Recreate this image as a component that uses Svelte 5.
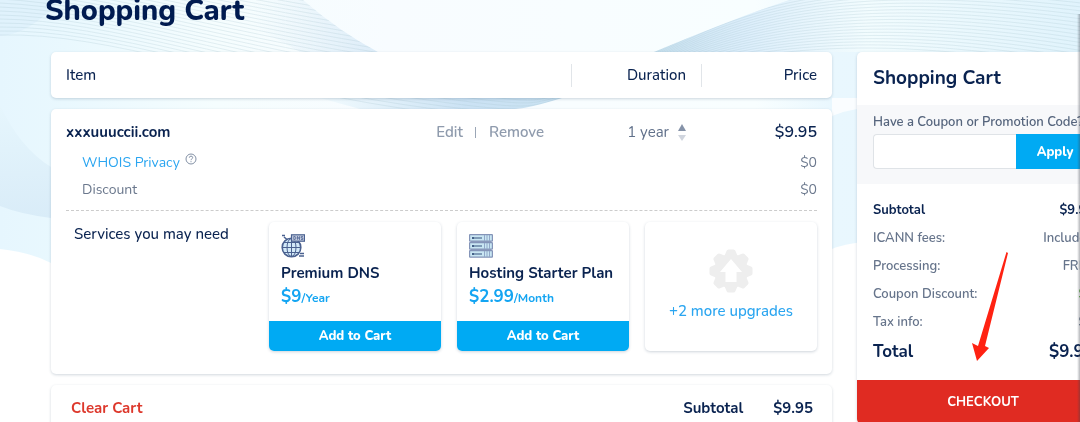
<script>
  const services = [
    { name: 'Premium DNS', price: '$9', unit: '/Year', icon: 'dns' },
    { name: 'Hosting Starter Plan', price: '$2.99', unit: '/Month', icon: 'server' }
  ];
  const fees = [
    { label: 'ICANN fees:', value: 'Included' },
    { label: 'Processing:', value: 'FREE' },
    { label: 'Coupon Discount:', value: '$0', green: true },
    { label: 'Tax info:', value: '$0' }
  ];
  const steps = Array.from({ length: 30 }, (_, i) => i);
  const leftLines = steps.map((i) => `M0 ${35 - i * 4} C110 ${32 - i * 3} 240 ${84 - i * 4} 400 ${108 - i * 4} S520 ${112 - i * 2} 580 ${98 - i}`);
  const rightLines = steps.map((i) => `M640 ${84 - i} C740 ${52 - i * 3} 860 ${28 - i * 3} 1090 ${72 - i * 4}`);
</script>

<div class="page">
  <svg class="waves" viewBox="0 0 1080 422" preserveAspectRatio="none" aria-hidden="true">
    <defs>
      <linearGradient id="sky" x1="0" y1="0" x2="1" y2="0">
        <stop offset="0" stop-color="#e6f6fe" />
        <stop offset=".06" stop-color="#e9f8fe" />
        <stop offset=".2" stop-color="#f5fdfe" />
        <stop offset=".36" stop-color="#f8fcff" />
        <stop offset=".7" stop-color="#f8feff" />
        <stop offset=".77" stop-color="#e9f7fe" />
        <stop offset="1" stop-color="#e6f7fd" />
      </linearGradient>
      <linearGradient id="band" x1="0" y1="0" x2="1" y2="0">
        <stop offset="0" stop-color="#c9e2f1" />
        <stop offset=".22" stop-color="#dceefb" />
        <stop offset=".5" stop-color="#f2fcfe" />
        <stop offset="1" stop-color="#e0f3fc" />
      </linearGradient>
      <linearGradient id="fold" x1="0" y1="0" x2="1" y2="0">
        <stop offset=".3" stop-color="#e0eff8" stop-opacity="0" />
        <stop offset="1" stop-color="#dcecf8" />
      </linearGradient>
      <linearGradient id="shade" x1="0" y1="0" x2="0" y2="1">
        <stop offset="0" stop-color="#e6f6fd" />
        <stop offset="1" stop-color="#d9ecf8" />
      </linearGradient>
      <linearGradient id="tail" x1="0" y1="0" x2="1" y2="0">
        <stop offset="0" stop-color="#f2fbfe" />
        <stop offset=".6" stop-color="#cbe2f4" />
        <stop offset="1" stop-color="#c9e2f2" />
      </linearGradient>
      <clipPath id="left"><path d="M0 0H303Q340 32 378 52L562 98Q530 108 515 109H0Z" /></clipPath>
      <clipPath id="right"><path d="M654 52Q745 14 790 0H1080V52Z" /></clipPath>
    </defs>
    <path d="M0 0H1080V230Q860 235 832 249Q500 350 51 263Q30 252 0 249Z" fill="url(#sky)" />
    <path d="M832 98H857V109Q844 111 832 116Z" fill="#fafdff" />
    <path d="M0 105Q20 148 51 167V218Q20 214 0 206Z" fill="url(#shade)" />
    <path d="M0 0H60Q30 34 0 36Z" fill="#e0f2fc" />
    <path d="M200 0H303Q340 32 378 52H300Q250 24 200 0Z" fill="url(#fold)" />
    <path d="M320 98H562Q530 108 515 109H360Z" fill="url(#tail)" />
    <path d="M654 52Q745 14 790 0H1080V52Z" fill="url(#band)" />
    <g fill="none" stroke="#a9c6d0" stroke-width=".8" opacity=".34">
      <g clip-path="url(#left)">{#each leftLines as d}<path {d} />{/each}</g>
      <g clip-path="url(#right)">{#each rightLines as d}<path {d} />{/each}</g>
    </g>
  </svg>

  <div class="content">
    <h1>Shopping Cart</h1>
    <div class="columns">
      <main>
        <div class="card head">
          <span class="grow">Item</span>
          <span class="duration">Duration</span>
          <span class="price">Price</span>
        </div>

        <section class="card product">
          <div class="row domain">
            <strong class="grow">xxxuuuccii.com</strong>
            <div class="actions"><button>Edit</button><i></i><button>Remove</button></div>
            <div class="term">
              <span>1 year</span>
              <button class="stepper" aria-label="Change duration">
                <svg width="8" height="17" viewBox="0 0 8 17"><path d="M4 0L8 7H0Z" fill="#8592a8" /><path d="M4 17L8 11H0Z" fill="#d0d5de" /></svg>
              </button>
            </div>
            <b class="amount">$9.95</b>
          </div>
          <div class="row sub">
            <span class="privacy"><a href="#whois">WHOIS Privacy</a>
              <svg width="12" height="12" viewBox="0 0 12 12" fill="none" stroke="#8290a5"><circle cx="6" cy="6" r="5" /><path d="M4.300 4.700Q4.400 3.100 6 3.100T7.700 4.600Q7.700 5.400 6.800 5.900Q6 6.300 6 7.200M6 8.200V9.200" /></svg>
            </span>
            <span>$0</span>
          </div>
          <div class="row sub"><span>Discount</span><span>$0</span></div>

          <div class="services">
            <h2>Services you may need</h2>
            {#each services as s}
              <article class="service">
                <div class="info">
                  {#if s.icon === 'dns'}
                    <svg width="24" height="24" viewBox="0 0 24 24" fill="none" stroke="#4a6190">
                      <circle cx="10.5" cy="13.5" r="9.3" fill="#d3e9f8" stroke-width="1.6" />
                      <ellipse cx="10.5" cy="13.5" rx="4.5" ry="9" />
                      <path d="M10.5 4V23M1 13.5H20M3 8.5H18M3 18.5H18" />
                      <path d="M1 1.500H4M3 3L6 5.500M19 19.500H23M18 22H23" stroke-width="1.6" />
                      <rect x="10.5" y=".8" width="13" height="6.4" fill="#c5cde0" stroke-width="1.2" />
                      <path d="M12.8 2.400V5.600M12.8 2.400Q15 2.400 15 4T12.8 5.600M16.5 5.700V2.400L18.5 5.600V2.300M22 2.600H20.200V4H21.8V5.500H20" stroke-width=".8" />
                    </svg>
                  {:else}
                    <svg width="24" height="24" viewBox="0 0 24 24">
                      <path d="M2 6H22V18H2Z" fill="#8795b7" />
                      {#each [0, 8, 16] as y}
                        <rect x=".6" y={y + 0.6} width="22.8" height="6.6" rx=".5" fill="#c9e6f3" stroke="#8494b8" stroke-width="1.2" />
                        <path d={`M3 ${y + 4}H13`} stroke="#36537e" stroke-width="1.2" />
                        <circle cx="4" cy={y + 4} r="1.1" fill="#36537e" />
                        <path d={`M15.5 ${y + 1}V${y + 7}M18 ${y + 1}V${y + 7}M20.5 ${y + 1}V${y + 7}`} stroke="#91a8c8" />
                      {/each}
                    </svg>
                  {/if}
                  <h3>{s.name}</h3>
                  <p><b>{s.price}</b>{s.unit}</p>
                </div>
                <button class="add">Add to Cart</button>
              </article>
            {/each}
            <a class="service more" href="#upgrades">
              <svg width="44" height="44" viewBox="-22 -22 44 44" fill="#eee">
                <circle r="17" />
                {#each [0, 45, 90, 135, 180, 225, 270, 315] as a}
                  <path d="M-7 -14L-4.500 -20Q-4 -21.500 -2.500 -21.500H2.500Q4 -21.500 4.500 -20L7 -14Z" transform={`rotate(${a})`} />
                {/each}
                <path d="M0 -12L11 1H5.500V11H-5.500V1H-11Z" fill="#fff" />
              </svg>
              <span>+2 more upgrades</span>
            </a>
          </div>
        </section>

        <div class="card foot">
          <button class="clear">Clear Cart</button>
          <b>Subtotal</b><b>$9.95</b>
        </div>
      </main>

      <aside>
        <h2>Shopping Cart</h2>
        <form class="coupon">
          <label for="coupon">Have a Coupon or Promotion Code?</label>
          <div class="field"><input id="coupon" type="text" /><button type="button">Apply</button></div>
        </form>
        <dl>
          <div class="line strong"><dt>Subtotal</dt><dd>$9.95</dd></div>
          {#each fees as f}
            <div class="line"><dt>{f.label}</dt><dd class:green={f.green}>{f.value}</dd></div>
          {/each}
          <div class="line total"><dt>Total</dt><dd>$9.95</dd></div>
        </dl>
        <button class="checkout">CHECKOUT</button>
        <svg class="arrow" width="36" height="110" viewBox="0 0 36 110" aria-hidden="true"><path d="M34.500 0L36 1L13 94L17 96L5 109L0 91L6 94Z" fill="#ff2212" /></svg>
      </aside>
    </div>
  </div>
  <div class="edge"></div>
</div>

<style>
  :global(body) { margin: 0; background: #fff; }
  .page { position: relative; overflow: hidden; height: 100vh; font: 15px/20px "Nunito", "Open Sans", sans-serif; color: #0a2350; }
  .waves { position: absolute; inset: 0; width: 100%; height: 100%; }
  .content { position: relative; padding-left: 51px; margin-right: -29px; }
  h1, h2, h3, p, dl, dd { margin: 0; }
  h1 { margin-left: -6px; height: 52px; font-size: 29px; line-height: 22px; font-weight: 800; color: #001b50; }
  button { font: inherit; border: 0; padding: 0; background: none; color: inherit; cursor: pointer; }
  a { color: #2aa5f0; text-decoration: none; }
  .columns { display: grid; grid-template-columns: minmax(0, 1fr) 252px; gap: 25px; align-items: start; }
  main { display: grid; gap: 11px; }
  .card { background: #fff; border-radius: 5px; box-shadow: 0 1px 3px rgba(30, 60, 90, .2); }
  .grow { flex: 1; }
  .head { display: flex; align-items: center; height: 46px; padding: 0 15px; }
  .head { font-weight: 500; }
  .duration, .price { border-left: 1px solid #e1e5e9; text-align: right; line-height: 23px; }
  .duration { width: 114px; padding-right: 15px; }
  .price { width: 115px; }
  .product { padding: 12px 15px 23px; height: 230px; }
  .row { display: flex; align-items: center; }
  .domain { height: 22px; }
  .domain strong { font-weight: 700; }
  .actions { display: flex; align-items: center; color: #8f9bad; font-weight: 600; }
  .actions i { width: 1px; height: 11px; margin: 0 13px 0 12px; background: #9ba6b6; }
  .term { display: flex; align-items: center; justify-content: flex-end; gap: 9px; width: 142px; color: #60708a; }
  .stepper { display: flex; }
  .amount { width: 131px; text-align: right; font-size: 16px; font-weight: 600; }
  .sub { justify-content: space-between; height: 27px; padding-left: 16px; font-size: 14px; color: #6b788d; }
  .domain + .sub { margin-top: 6px; }
  .privacy { display: flex; gap: 5px; }
  .services { display: grid; grid-template-columns: minmax(0, 1fr) repeat(3, 172px); gap: 16px; margin-top: 7px; padding-top: 11px; border-top: 1px dashed #ccc; }
  .services h2 { padding-left: 8px; font-size: 15px; line-height: 24px; font-weight: 500; white-space: nowrap; }
  .service { display: flex; flex-direction: column; justify-content: space-between; height: 129px; overflow: hidden; border-radius: 5px; background: #fff; box-shadow: 0 1px 3px rgba(30, 60, 90, .22); }
  .info { padding: 12px 12px 0; }
  .info svg { display: block; }
  h3 { margin-top: 5px; font-size: 15px; line-height: 20px; font-weight: 700; white-space: nowrap; }
  .info p { font-size: 12px; line-height: 28px; font-weight: 700; color: #14a5f2; }
  .info p b { font-size: 17px; font-weight: 700; }
  .add { height: 30px; background: #00aaf3; color: #fff; font-size: 13px; font-weight: 800; }
  .service.more { justify-content: center; }
  .more { align-items: center; gap: 8px; font-weight: 500; }
  .more svg { margin-top: -4px; }
  .foot { display: flex; align-items: center; gap: 30px; height: 46px; padding: 0 19px 0 20px; }
  .foot b { font-weight: 700; }
  .clear { margin-right: auto; color: #dd382c; font-weight: 700; }
  aside { position: relative; overflow: hidden; border-radius: 5px; background: #fff; box-shadow: 0 1px 3px rgba(30, 60, 90, .22); }
  aside h2 { padding: 0 16px; font-size: 19px; line-height: 53px; font-weight: 700; }
  .coupon { padding: 7px 15px 15px 16px; background: #f7f8fa; color: #56657d; font-size: 13px; font-weight: 600; }
  .coupon label { display: block; margin-bottom: 2px; white-space: nowrap; }
  .field { display: flex; height: 35px; }
  input { flex: 1; min-width: 0; box-sizing: border-box; border: 1px solid #dfe3e7; border-right: 0; border-radius: 4px 0 0 4px; background: #fff; font: inherit; }
  .field button { width: 78px; background: #00aaf3; color: #fff; font-weight: 800; }
  dl { padding: 12px 15px 12px 16px; font-size: 13px; font-weight: 600; color: #66748b; }
  .line { display: flex; justify-content: space-between; line-height: 28px; }
  .strong, .total { font-weight: 700; color: #0a2350; }
  .total { font-size: 17px; line-height: 32px; }
  .green { color: #55ad37; }
  .checkout { display: block; width: 100%; height: 44px; background: #e02b22; color: #fff; font-size: 13px; font-weight: 700; }
  .arrow { position: absolute; left: 115px; top: 200px; }
  .edge { position: absolute; top: 14px; right: 0; bottom: 0; width: 3px; background: linear-gradient(90deg, transparent, rgba(60, 65, 75, .38)); }
</style>
